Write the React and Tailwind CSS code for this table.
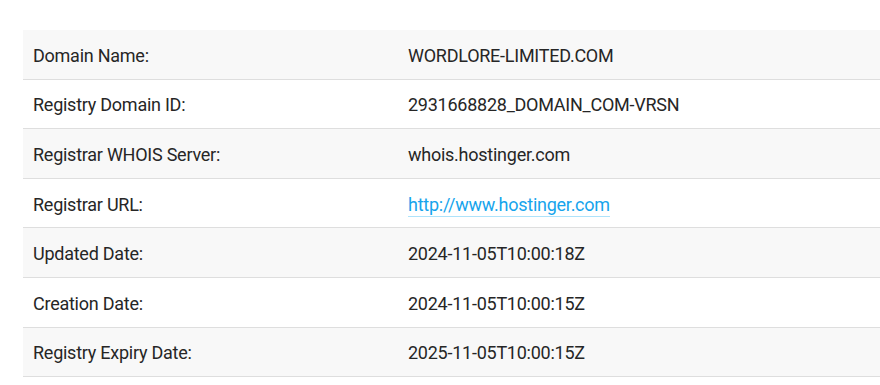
const rows = [
  ["Domain Name:", "WORDLORE-LIMITED.COM"],
  ["Registry Domain ID:", "2931668828_DOMAIN_COM-VRSN"],
  ["Registrar WHOIS Server:", "whois.hostinger.com"],
  ["Registrar URL:", "http://www.hostinger.com", true],
  ["Updated Date:", "2024-11-05T10:00:18Z"],
  ["Creation Date:", "2024-11-05T10:00:15Z"],
  ["Registry Expiry Date:", "2025-11-05T10:00:15Z"],
];

export default function App() {
  return (
    <div
      className="min-h-[385px] bg-white pt-[30px] pl-[23px] text-[18px] tracking-[-0.25px] text-[#262626]"
      style={{ fontFamily: "Roboto, 'Liberation Sans', sans-serif" }}
    >
      <div className="w-[857px]">
        {rows.map(([label, value, link], i) => (
          <div
            key={label}
            className={
              "flex h-[49.6px] items-center border-b border-[#dedede] pt-[2px] " +
              (i % 2 === 0 ? "bg-[#f8f8f8]" : "bg-white")
            }
          >
            <div className="w-[375px] pl-[10px]">{label}</div>
            <div className="pl-[10px]">
              {link ? (
                <a
                  href="#"
                  className="border-b border-[#aee3fb] pb-[1px] text-[#16a4ec]"
                >
                  {value}
                </a>
              ) : (
                value
              )}
            </div>
          </div>
        ))}
      </div>
    </div>
  );
}
